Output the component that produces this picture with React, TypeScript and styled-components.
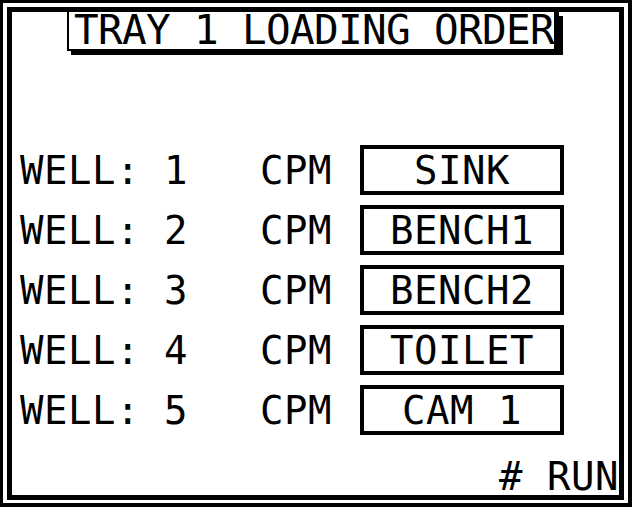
import React from "react";
import styled, { createGlobalStyle } from "styled-components";

const Global = createGlobalStyle`
  html, body { margin: 0; padding: 0; background: #fff; }
  body { font-family: "DejaVu Sans Mono", "Liberation Mono", monospace; color: #000; }
`;

const Screen = styled.div`
  box-sizing: border-box;
  width: 632px;
  height: 507px;
  border-style: solid;
  border-color: #000;
  border-width: 3px 4px 4px 3px;
  padding: 4px 4px 3px 4px;
  background: #fff;
`;

const Frame = styled.div`
  box-sizing: border-box;
  height: 100%;
  border: 5px solid #000;
  border-top-width: 5px;
  display: flex;
  flex-direction: column;
  padding: 0 0 0 8px;
`;

const TitleBox = styled.div`
  box-sizing: border-box;
  align-self: flex-start;
  margin-left: 47px;
  width: 492px;
  height: 39px;
  border-style: solid;
  border-color: #000;
  border-width: 0 5px 2px 2px;
  box-shadow: 4px 4px 0 #000;
  display: flex;
  align-items: center;
  padding-left: 5px;
`;

const TitleText = styled.span`
  font-size: 41px;
  line-height: 1;
  letter-spacing: -0.68px;
  white-space: pre;
`;

const Rows = styled.div`
  display: flex;
  flex-direction: column;
  gap: 10px;
  margin-top: 94px;
`;

const Row = styled.div`
  display: flex;
  align-items: center;
  height: 50px;
`;

const Text = styled.span`
  font-size: 39px;
  line-height: 1;
  letter-spacing: 0.52px;
  white-space: pre;
`;

const Label = styled(Text)<{ $w: number }>`
  width: ${(p) => p.$w}px;
`;

const NameBox = styled.div`
  box-sizing: border-box;
  width: 204px;
  height: 50px;
  border: 4px solid #000;
  display: flex;
  align-items: center;
  justify-content: center;
`;

const Footer = styled(Text)`
  align-self: flex-end;
  margin-top: 22px;
`;

const wells = ["SINK", "BENCH1", "BENCH2", "TOILET", "CAM 1"];

export default function App() {
  return (
    <>
      <Global />
      <Screen>
        <Frame>
          <TitleBox>
            <TitleText>TRAY 1 LOADING ORDER</TitleText>
          </TitleBox>
          <Rows>
            {wells.map((name, i) => (
              <Row key={i}>
                <Label $w={340}>{`WELL: ${i + 1}   CPM`}</Label>
                <NameBox>
                  <Text>{name}</Text>
                </NameBox>
              </Row>
            ))}
          </Rows>
          <Footer># RUN</Footer>
        </Frame>
      </Screen>
    </>
  );
}
